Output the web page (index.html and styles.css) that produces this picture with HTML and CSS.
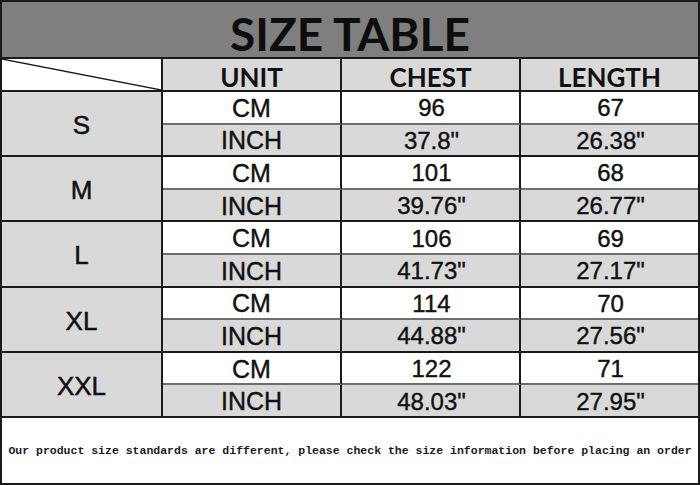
FILE: index.html
```html
<!DOCTYPE html>
<html>
<head>
<meta charset="utf-8">
<link rel="stylesheet" href="styles.css">
</head>
<body>
<div class="sheet">
  <div class="title">SIZE TABLE</div>

  <div class="corner"><svg class="diag" viewBox="0 0 100 100" preserveAspectRatio="none"><line x1="0" y1="0" x2="100" y2="100" stroke="#1a1a1a" stroke-width="1.3" vector-effect="non-scaling-stroke"/></svg></div>
  <div class="head">UNIT</div>
  <div class="head">CHEST</div>
  <div class="head last">LENGTH</div>

  <div class="size">S</div>
  <div class="cm">CM</div><div class="cm num">96</div><div class="cm num last">67</div>
  <div class="inch">INCH</div><div class="inch num">37.8"</div><div class="inch num last">26.38"</div>

  <div class="size">M</div>
  <div class="cm">CM</div><div class="cm num">101</div><div class="cm num last">68</div>
  <div class="inch">INCH</div><div class="inch num">39.76"</div><div class="inch num last">26.77"</div>

  <div class="size">L</div>
  <div class="cm">CM</div><div class="cm num">106</div><div class="cm num last">69</div>
  <div class="inch">INCH</div><div class="inch num">41.73"</div><div class="inch num last">27.17"</div>

  <div class="size">XL</div>
  <div class="cm">CM</div><div class="cm num">114</div><div class="cm num last">70</div>
  <div class="inch">INCH</div><div class="inch num">44.88"</div><div class="inch num last">27.56"</div>

  <div class="size">XXL</div>
  <div class="cm">CM</div><div class="cm num">122</div><div class="cm num last">71</div>
  <div class="inch">INCH</div><div class="inch num">48.03"</div><div class="inch num last">27.95"</div>

  <div class="note">Our product size standards are different, please check the size information before placing an order</div>
</div>
</body>
</html>
```
FILE: styles.css
```css
html, body {
  margin: 0;
  padding: 0;
  background: #ffffff;
}

.sheet {
  width: 700px;
  height: 485px;
  box-sizing: border-box;
  border: 2px solid #1a1a1a;
  display: grid;
  grid-template-columns: 161px 179px 179px 1fr;
  grid-template-rows: 57px 33px repeat(10, 32.6px) 1fr;
  font-family: "Liberation Sans", Arial, sans-serif;
  color: #111111;
}

.sheet > div {
  box-sizing: border-box;
  display: flex;
  align-items: center;
  justify-content: center;
}

.title {
  grid-column: 1 / -1;
  background: #7f7f7f;
  border-bottom: 2px solid #1a1a1a;
  font-family: "Lato", "Liberation Sans", sans-serif;
  font-weight: 700;
  font-size: 46px;
  padding-top: 8px;
  color: #0d0d0d;
}

.corner {
  background: #ffffff;
  border-right: 2px solid #1a1a1a;
  border-bottom: 2px solid #1a1a1a;
}

.diag {
  width: 100%;
  height: 100%;
  display: block;
}

.head {
  background: #d9d9d9;
  border-right: 2px solid #1a1a1a;
  border-bottom: 2px solid #1a1a1a;
  font-family: "Lato", "Liberation Sans", sans-serif;
  font-weight: 700;
  font-size: 26px;
  padding-top: 5px;
}

.size {
  grid-column: 1;
  grid-row: span 2;
  background: #d9d9d9;
  border-right: 2px solid #1a1a1a;
  border-bottom: 2px solid #1a1a1a;
  font-size: 26px;
  padding-top: 4px;
  -webkit-text-stroke: 0.5px #111111;
}

.cm, .inch {
  font-size: 25px;
  border-right: 2px solid #1a1a1a;
  -webkit-text-stroke: 0.4px #111111;
  padding-top: 2px;
}

.sheet > .num {
  font-size: 24px;
  padding-left: 2px;
}

.cm {
  background: #ffffff;
  border-bottom: 2px solid #6e6e6e;
}

.inch {
  background: #d9d9d9;
  border-bottom: 2px solid #1a1a1a;
}

.sheet > .last {
  border-right: none;
}

.note {
  grid-column: 1 / -1;
  font-family: "Liberation Mono", "Courier New", monospace;
  font-weight: 700;
  font-size: 11.5px;
  color: #1a1a1a;
  white-space: nowrap;
}
```
